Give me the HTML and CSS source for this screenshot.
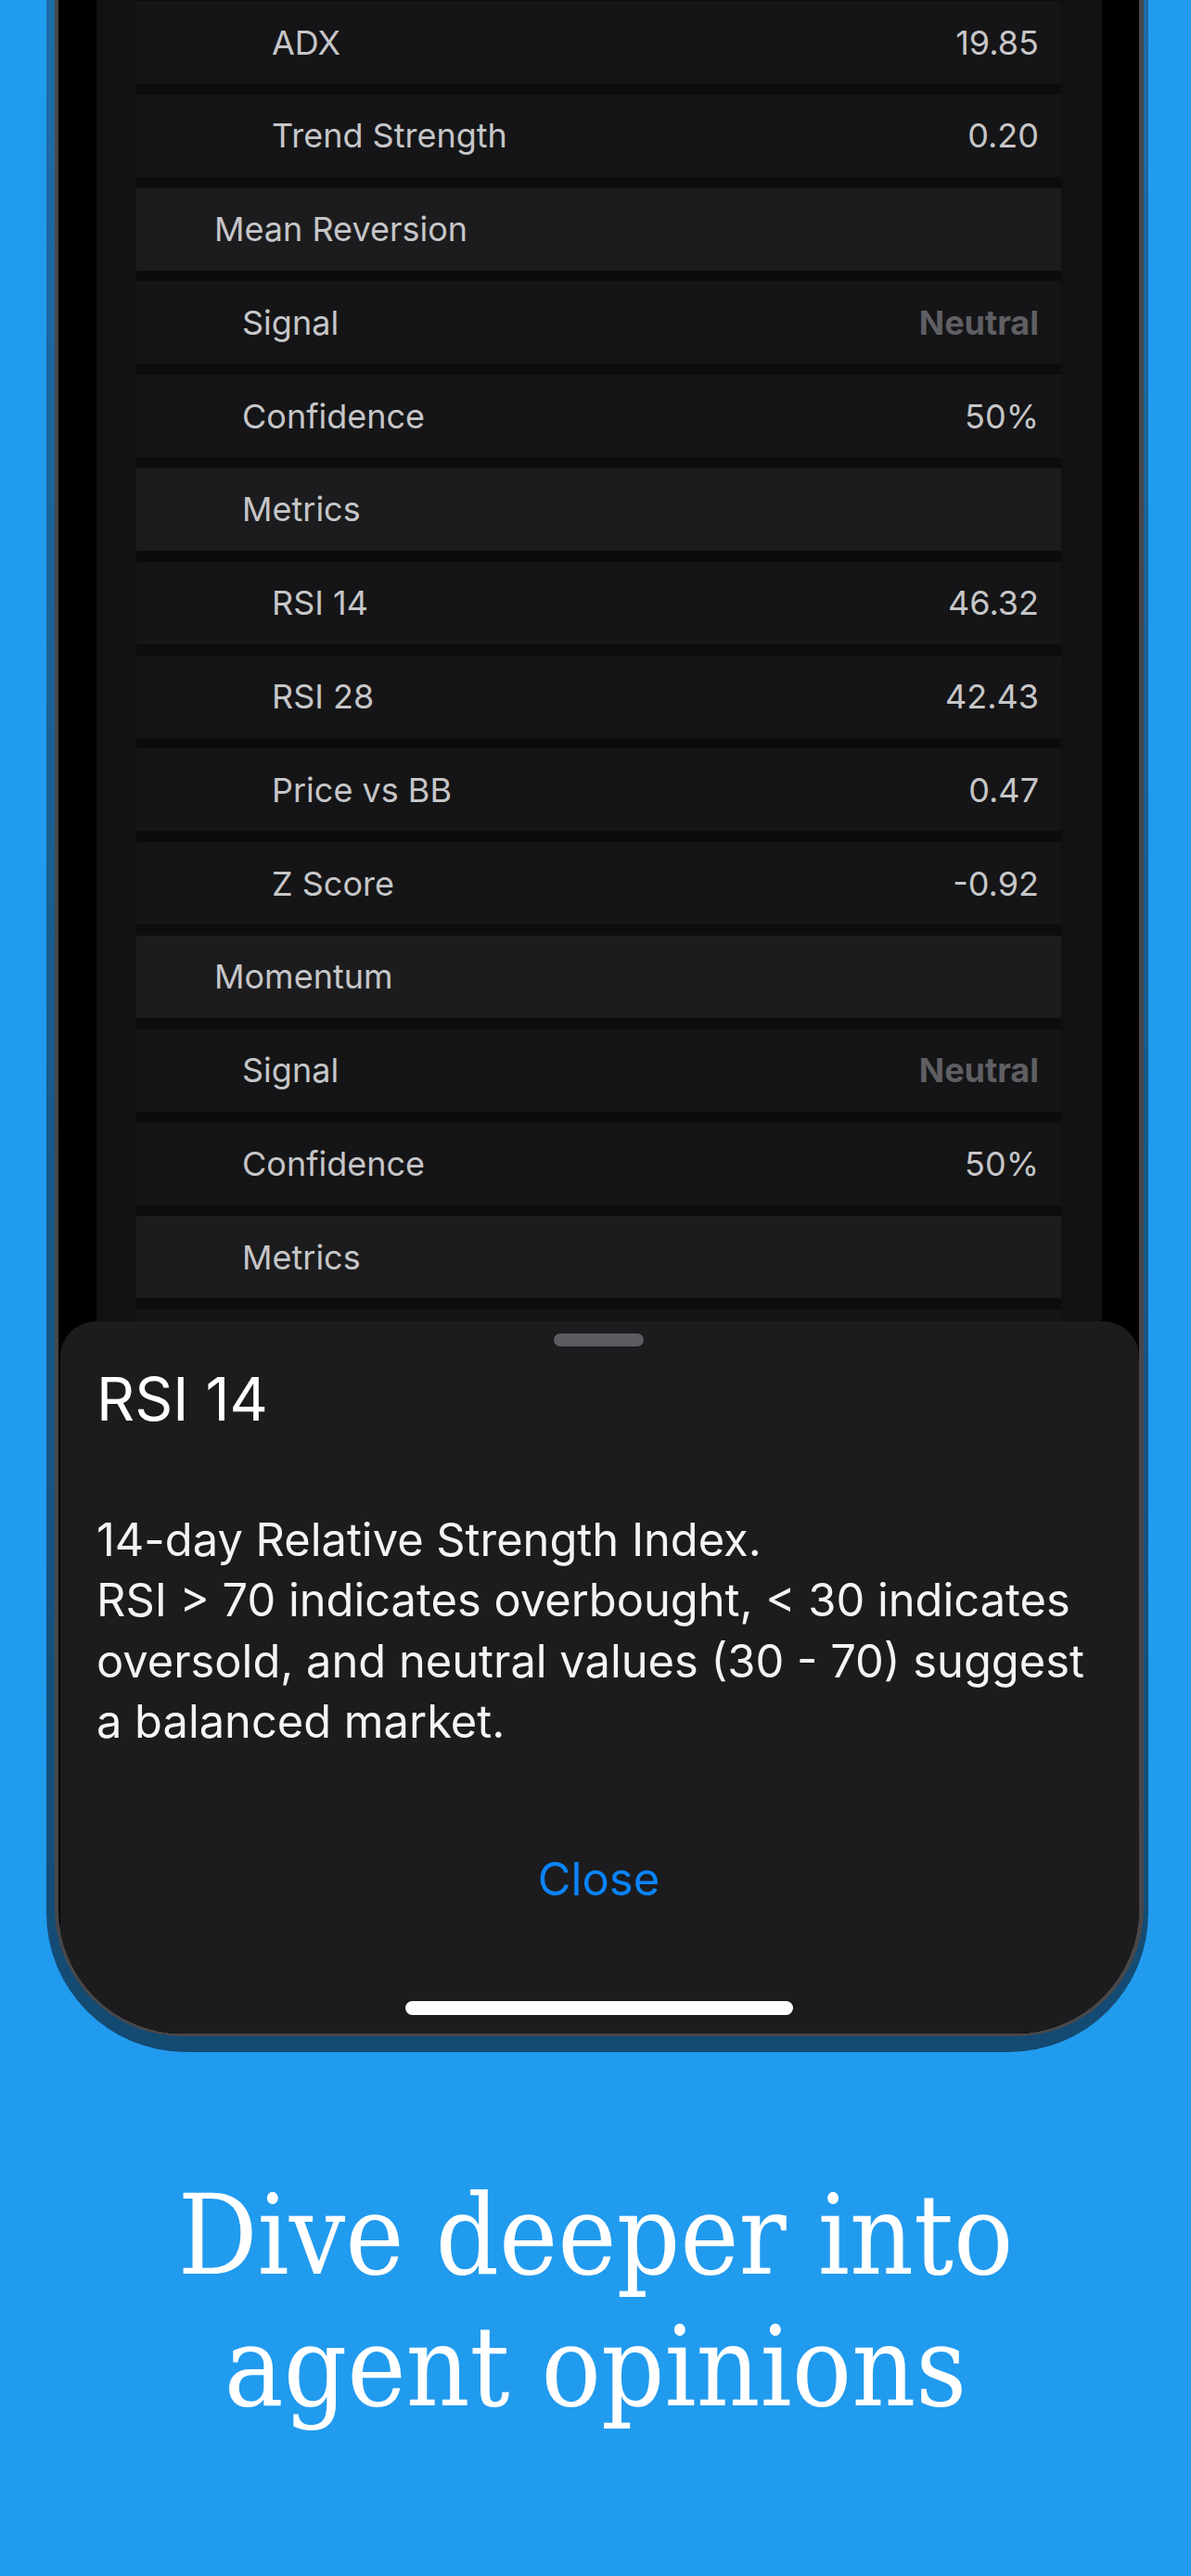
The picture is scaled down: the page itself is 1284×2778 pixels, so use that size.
FILE: index.html
```html
<!DOCTYPE html>
<html lang="en">
  <head>
    <meta charset="UTF-8" />
    <meta name="viewport" content="width=device-width, initial-scale=1.0" />
    <title>Dive deeper into agent opinions</title>
    <link rel="stylesheet" href="styles.css">
  </head>
  <body>
    <div class="phone">
      <div class="frame">
        <div class="screen">
          <!-- 背面のアプリ画面 -->
          <div class="card">
            <div class="list">
              <div class="row lvl3"><span>ADX</span><span>19.85</span></div>
              <div class="row lvl3"><span>Trend Strength</span><span>0.20</span></div>
              <div class="row group lvl1"><span>Mean Reversion</span></div>
              <div class="row lvl2"><span>Signal</span><span class="muted">Neutral</span></div>
              <div class="row lvl2"><span>Confidence</span><span>50%</span></div>
              <div class="row group lvl2"><span>Metrics</span></div>
              <div class="row lvl3"><span>RSI 14</span><span>46.32</span></div>
              <div class="row lvl3"><span>RSI 28</span><span>42.43</span></div>
              <div class="row lvl3"><span>Price vs BB</span><span>0.47</span></div>
              <div class="row lvl3"><span>Z Score</span><span>-0.92</span></div>
              <div class="row group lvl1"><span>Momentum</span></div>
              <div class="row lvl2"><span>Signal</span><span class="muted">Neutral</span></div>
              <div class="row lvl2"><span>Confidence</span><span>50%</span></div>
              <div class="row group lvl2"><span>Metrics</span></div>
              <div class="row lvl3"><span>RSI 14</span><span>48.10</span></div>
            </div>
          </div>

          <!-- 説明シート -->
          <div class="sheet">
            <div class="grabber"></div>
            <h2 class="sheet-title">RSI 14</h2>
            <p class="sheet-text">14-day Relative Strength Index.<br>RSI &gt; 70 indicates overbought, &lt; 30 indicates oversold, and neutral values (30 - 70) suggest a balanced market.</p>
            <div class="close-btn">Close</div>
            <div class="home-bar"></div>
          </div>
        </div>
      </div>
    </div>

    <h1 class="caption">Dive deeper into<br>agent opinions</h1>
  </body>
</html>
```

FILE: styles.css
```css
* {
  box-sizing: border-box;
}

body {
  margin: 0;
  width: 1284px;
  height: 2778px;
  overflow: hidden;
  background-color: #219bee;
  font-family: Inter, "Noto Sans", sans-serif;
}

/* 端末の外枠 */
.phone {
  width: 1188px;
  height: 2213px;
  margin-left: 50px;
  padding: 0 5px 17px 9px;
  background: linear-gradient(#1d6ca8, #134a72);
  border-radius: 0 0 150px 150px;
}

.frame {
  height: 100%;
  padding: 0 5px 3px 4px;
  background-color: #48484b;
  border-radius: 0 0 138px 138px;
}

.screen {
  position: relative;
  height: 100%;
  padding: 0 40px 0 41px;
  background-color: #000;
  border-radius: 0 0 134px 134px;
  overflow: hidden;
}

.card {
  height: 100%;
  padding: 0 44px 0 43px;
  background-color: #111113;
}

.list {
  display: flex;
  flex-direction: column;
  gap: 11.8px;
  padding-top: 1px;
  height: 100%;
  background-color: #0c0c0d;
}

.row {
  display: flex;
  align-items: center;
  justify-content: space-between;
  flex-shrink: 0;
  height: 89px;
  padding-right: 24px;
  background-color: #151517;
  color: #c6c6c8;
  font-size: 36px;
}

.row.group {
  background-color: #1c1c1e;
}

.lvl1 {
  padding-left: 84px;
}

.lvl2 {
  padding-left: 114px;
}

.lvl3 {
  padding-left: 146px;
}

.muted {
  color: #5f5f63;
  font-weight: 700;
}

/* シート */
.sheet {
  position: absolute;
  top: 1425px;
  left: 2px;
  right: 0;
  bottom: 0;
  display: flex;
  flex-direction: column;
  padding: 13px 41px 0 39px;
  background-color: #1c1c1e;
  border-radius: 38px 38px 0 0;
}

.grabber {
  align-self: center;
  width: 97px;
  height: 14px;
  border-radius: 7px;
  background-color: #5c5c60;
}

.sheet-title {
  margin: 25px 0 0;
  font-size: 64px;
  line-height: 64px;
  font-weight: 400;
  color: #fff;
}

.sheet-text {
  margin: 87px 0 0;
  font-size: 48.8px;
  line-height: 65.3px;
  color: #f4f4f4;
}

.close-btn {
  margin-top: 113px;
  text-align: center;
  font-size: 49px;
  line-height: 49px;
  color: #0a84ff;
}

.home-bar {
  align-self: center;
  width: 418px;
  height: 15px;
  margin-top: auto;
  margin-bottom: 20px;
  border-radius: 8px;
  background-color: #fff;
}

/* キャプション */
.caption {
  margin: 127px 0 0;
  text-align: center;
  font-family: "DejaVu Serif Condensed", "DejaVu Serif", serif;
  font-stretch: condensed;
  font-size: 119px;
  line-height: 142px;
  font-weight: 400;
  color: #fff;
}
```
